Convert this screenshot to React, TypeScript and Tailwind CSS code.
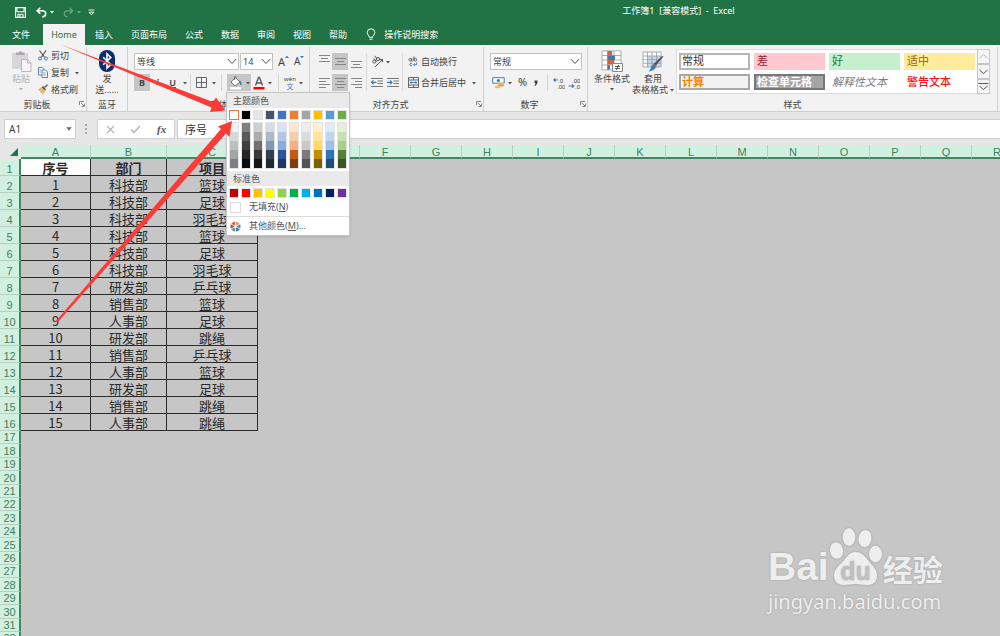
import React from "react";

const TABS = ["插入", "页面布局", "公式", "数据", "审阅", "视图", "帮助"];

const SPORTS: [string, string][] = [
  ["科技部", "篮球"],
  ["科技部", "足球"],
  ["科技部", "羽毛球"],
  ["科技部", "篮球"],
  ["科技部", "足球"],
  ["科技部", "羽毛球"],
  ["研发部", "乒乓球"],
  ["销售部", "篮球"],
  ["人事部", "足球"],
  ["研发部", "跳绳"],
  ["销售部", "乒乓球"],
  ["人事部", "篮球"],
  ["研发部", "足球"],
  ["销售部", "跳绳"],
  ["人事部", "跳绳"],
];

const EXTRA_COLUMNS = "DEFGHIJKLMNOPQR".split("");

const THEME_COLUMNS: string[][] = [
  ["#ffffff", "#f2f2f2", "#d8d8d8", "#bfbfbf", "#a5a5a5", "#7f7f7f"],
  ["#000000", "#7f7f7f", "#595959", "#3f3f3f", "#262626", "#0c0c0c"],
  ["#e7e6e6", "#d0cece", "#aeabab", "#757070", "#3a3838", "#171616"],
  ["#44546a", "#d6dce4", "#adb9ca", "#8496b0", "#323f4f", "#222a35"],
  ["#4472c4", "#d9e2f3", "#b4c6e7", "#8eaadb", "#2f5496", "#1f3864"],
  ["#ed7d31", "#fbe5d5", "#f7cbac", "#f4b183", "#c55a11", "#833c0b"],
  ["#a5a5a5", "#ededed", "#dbdbdb", "#c9c9c9", "#7b7b7b", "#525252"],
  ["#ffc000", "#fff2cc", "#fee599", "#ffd965", "#bf9000", "#7f6000"],
  ["#5b9bd5", "#deebf6", "#bdd7ee", "#9cc3e5", "#2e75b5", "#1e4e79"],
  ["#70ad47", "#e2efd9", "#c5e0b3", "#a8d08d", "#538135", "#375623"],
];

const STANDARD = ["#c00000", "#ff0000", "#ffc000", "#ffff00", "#92d050", "#00b050", "#00b0f0", "#0070c0", "#002060", "#7030a0"];

function Caret({ faint = false }: { faint?: boolean }) {
  return (
    <svg className={faint ? "h-1 w-1 shrink-0 text-[#b0b0b0]" : "h-1 w-1 shrink-0 text-[#555]"} viewBox="0 0 4 4" fill="currentColor">
      <path d="M0 1h4L2 3.4z" />
    </svg>
  );
}

function Divider() {
  return <span className="h-[17px] w-px shrink-0 bg-[#d4d4d4]" />;
}

function Launcher() {
  return (
    <button aria-label="更多设置" className="absolute bottom-1 right-px h-[6px] w-[6px]">
      <svg viewBox="0 0 6 6" className="h-[6px] w-[6px]" fill="none" stroke="#666" strokeWidth="0.8">
        <path d="M.5 4V.5H5M2 2l3 3M5.4 2.6v2.9H2.6" />
      </svg>
    </button>
  );
}

function Group({ label, launcher, className, children }: { label: string; launcher?: boolean; className: string; children: React.ReactNode }) {
  return (
    <section aria-label={label} className={"relative flex flex-col border-r border-[#d0d0d0] " + className}>
      <div className="h-[51px]">{children}</div>
      <div className="h-[13px] text-center leading-[13px]">{label}</div>
      {launcher && <Launcher />}
    </section>
  );
}

function Combo({ label, value, className }: { label: string; value: string; className: string }) {
  return (
    <div className={"relative flex h-[17px] shrink-0 " + className}>
      <select aria-label={label} defaultValue={value} className="h-full w-full appearance-none border border-[#c3c3c3] bg-white pl-[2px] leading-[15px] outline-none">
        <option>{value}</option>
      </select>
      <svg className="pointer-events-none absolute right-[2px] top-[5px] h-[7px] w-[10px]" viewBox="0 0 10 7" fill="none" stroke="#555">
        <path d="M.8 1 5 5.5 9.2 1" />
      </svg>
    </div>
  );
}

function Lines({ kind, offset = 2 }: { kind: "full" | "left" | "center" | "right"; offset?: number }) {
  const count = kind === "full" ? 3 : 4;
  const rows = Array.from({ length: count }, (_, i) => {
    const short = i % 2 === 1;
    const w = short ? 7 : 11;
    const x = kind === "right" ? 11 - w : kind === "left" ? 0 : (11 - w) / 2;
    return <rect key={i} x={x} y={offset + i * 3} width={w} height="1" />;
  });
  return (
    <svg viewBox="0 0 11 15" className="h-[15px] w-[11px]" fill="#858585">
      {rows}
    </svg>
  );
}

function TitleBar() {
  return (
    <div className="flex h-6 items-center pl-[15px] text-white">
      <button aria-label="保存" className="mr-[10px]">
        <svg viewBox="0 0 11 11" className="h-[11px] w-[11px]" fill="none" stroke="#fff" strokeWidth="1.1">
          <path d="M.6.6h9.8v9.8H.6zM2 .6v4.2h7V.6M3 10.4V7.2h5v3.2M5 8v2" />
        </svg>
      </button>
      <button aria-label="撤消" className="mr-[9px] flex items-center gap-[3px]">
        <svg viewBox="0 0 11 11" className="h-[11px] w-[11px]" fill="none" stroke="#fff" strokeWidth="1.6">
          <path d="M4.300.8 1.200 3.800l3.100 3M1.400 3.800h4.800c2 0 3.500 1.200 3.500 3 0 1.700-1.400 2.900-3.400 3.200" />
        </svg>
        <svg viewBox="0 0 4 4" className="h-1 w-1" fill="#fff"><path d="M0 1h4L2 3.400z" /></svg>
      </button>
      <button aria-label="恢复" className="mr-[7px] flex items-center gap-[3px] opacity-35">
        <svg viewBox="0 0 11 11" className="h-[11px] w-[11px]" fill="none" stroke="#fff" strokeWidth="1.200">
          <path d="M6.700.8l3.100 3-3.100 3M9.600 3.800H4.800c-2 0-3.500 1.200-3.500 3 0 1.700 1.400 2.900 3.400 3.200" />
        </svg>
        <svg viewBox="0 0 4 4" className="h-1 w-1" fill="#fff"><path d="M0 1h4L2 3.400z" /></svg>
      </button>
      <button aria-label="自定义快速访问工具栏">
        <svg viewBox="0 0 7 7" className="h-[7px] w-[7px]" fill="none" stroke="#fff" strokeWidth="0.900">
          <path d="M.5 1h6M1 3.200h5L3.500 5.800z" />
        </svg>
      </button>
      <h1 className="ml-[262px] flex-1 whitespace-pre pb-[2px] text-center text-[9px]">工作簿1  [兼容模式]  -  Excel</h1>
    </div>
  );
}

function TabStrip() {
  return (
    <nav className="flex h-[21px] items-stretch pl-[3px] text-[9px] text-white">
      <button className="px-[9px]">文件</button>
      <button className="ml-1 mr-px w-[42px] bg-[#f2f2f2] text-[#217346]">Home</button>
      {TABS.map((t) => (
        <button key={t} className="px-[9px]">{t}</button>
      ))}
      <button className="ml-[10px] flex items-center gap-2">
        <svg viewBox="0 0 10 13" className="h-[13px] w-[10px]" fill="none" stroke="#fff" strokeWidth="1">
          <path d="M3.300 9.300C3.300 7.500 1.200 6.800 1.200 4.600a3.800 3.800 0 0 1 7.600 0c0 2.200-2.100 2.900-2.100 4.700zM3.500 11.200h3" />
        </svg>
        操作说明搜索
      </button>
    </nav>
  );
}

function ClipboardGroup() {
  return (
    <Group label="剪贴板" launcher className="w-[87px] shrink-0 [&>div:nth-child(2)]:pr-3">
      <div className="flex">
        <button className="flex w-[38px] flex-col items-center pl-1 pt-[3px] text-[#b5b5b5]">
          <svg viewBox="0 0 21 22" className="h-[22px] w-[21px]">
            <path d="M1 3h16v16H1z" fill="#d9d6d9" />
            <path d="M5 5V2.500h2.500a1.800 1.800 0 0 1 3.400 0h2.600V5z" fill="#aaa5aa" />
            <path d="M10.500 9.500h6l3.500 3.500v8.500h-9.500z" fill="#f7f3f7" stroke="#b9b5b9" />
            <path d="M16.500 9.500V13H20" fill="none" stroke="#b9b5b9" />
          </svg>
          <span className="leading-[13px]">粘贴</span>
          <span className="flex h-2 items-center"><Caret faint /></span>
        </button>
        <div className="flex flex-col">
          <button className="flex h-[17px] items-center gap-[3px]">
            <svg viewBox="0 0 10 11" className="h-[11px] w-[10px]" fill="none">
              <path d="M1.500.5 6.800 7.500M8 .5 3.200 7.500" stroke="#555" strokeWidth="1.200" />
              <circle cx="2" cy="8.500" r="1.500" stroke="#3d7ab8" /><circle cx="7.900" cy="8.500" r="1.500" stroke="#3d7ab8" />
            </svg>
            剪切
          </button>
          <button className="flex h-[17px] items-center gap-[3px]">
            <svg viewBox="0 0 10 11" className="h-[11px] w-[10px]" fill="#fff" stroke="#5a7391" strokeWidth="0.900">
              <path d="M.5.5h3.700L6 2.300v5.700H.5z" /><path d="M4 3h3.500l2 2v5.500H4z" />
              <path d="M5.200 6h2.500M5.200 8h2.500M1.500 3h1.500M1.500 5h1.500" stroke="#4b92d4" />
            </svg>
            复制
            <span className="ml-[3px]"><Caret /></span>
          </button>
          <button className="flex h-[17px] items-center gap-[3px]">
            <svg viewBox="0 0 10 11" className="h-[11px] w-[10px]">
              <path d="M0 5.500 3.500 3l4 4-2.500 3.500z" fill="#f0b968" />
              <path d="M3.600 3.300 5 2l3 3.400-1 1.200z" fill="#555" /><path d="M6.500 3.500 9.500.8" stroke="#555" strokeWidth="1.400" />
            </svg>
            格式刷
          </button>
        </div>
      </div>
    </Group>
  );
}

function BluetoothGroup() {
  return (
    <Group label="蓝牙" className="w-[41px] shrink-0">
      <button className="flex w-full flex-col items-center pt-[3px]">
        <svg viewBox="0 0 16 22" className="h-[22px] w-4">
          <rect width="16" height="22" rx="8" fill="#0a2f6b" />
          <path d="M4.200 7.200 11.800 14.600 8 18.200V3.800l3.800 3.600-7.600 7.400" fill="none" stroke="#fff" strokeWidth="1.600" />
        </svg>
        <span className="leading-[13px]">发</span>
        <span className="leading-[9px]">送......</span>
      </button>
    </Group>
  );
}

function Swatch({ color, selected = false }: { color: string; selected?: boolean }) {
  return (
    <button
      aria-label={color}
      className={selected ? "h-[10px] w-[10px] border border-[#f0703a]" : "h-[10px] w-[10px] border border-[#e2e2e2]"}
      style={{ backgroundColor: color }}
    />
  );
}

function ColorMenu() {
  return (
    <div role="menu" aria-label="填充颜色" className="absolute left-[-1px] top-[18px] z-20 w-[124px] border border-[#c6c6c6] bg-white text-[9px] text-[#555] shadow-sm">
      <div className="h-[15px] bg-[#eaeaea] pl-[6px] leading-[15px]">主题颜色</div>
      <div className="flex justify-between px-[2px] pt-[2px]">
        {THEME_COLUMNS.map((c, i) => (
          <Swatch key={i} color={c[0]} selected={i === 0} />
        ))}
      </div>
      <div className="flex justify-between px-[2px] pb-[2px] pt-[2px]">
        {THEME_COLUMNS.map((c, i) => (
          <div key={i} className="flex w-[10px] flex-col border border-[#e2e2e2]">
            {c.slice(1).map((v) => (
              <button key={v} aria-label={v} className="h-[9px]" style={{ backgroundColor: v }} />
            ))}
          </div>
        ))}
      </div>
      <div className="h-[15px] bg-[#eaeaea] pl-[6px] leading-[15px]">标准色</div>
      <div className="flex justify-between px-[2px] pt-[2px]">
        {STANDARD.map((c) => (
          <Swatch key={c} color={c} />
        ))}
      </div>
      <button role="menuitem" className="flex h-[19px] w-full items-center gap-2 border-b border-[#dcdcdc] pl-[3px]">
        <span className="h-[11px] w-[11px] border border-[#dcdcdc] bg-white" />
        <span>无填充(<u>N</u>)</span>
      </button>
      <button role="menuitem" className="flex h-[18px] w-full items-center gap-2 pl-[3px]">
        <svg viewBox="0 0 12 12" className="h-[11px] w-[11px]">
          <path d="M6 6V.5A5.500 5.500 0 0 1 10.800 3.300z" fill="#eda05c" />
          <path d="M6 6l4.800-2.700a5.500 5.500 0 0 1 0 5.400z" fill="#5b8fc7" />
          <path d="M6 6l4.800 2.700A5.500 5.500 0 0 1 6 11.500z" fill="#4774a8" />
          <path d="M6 6v5.500a5.500 5.500 0 0 1-4.800-2.800z" fill="#63a06b" />
          <path d="M6 6 1.200 8.700a5.500 5.500 0 0 1 0-5.400z" fill="#9a5a78" />
          <path d="M6 6 1.200 3.300A5.500 5.500 0 0 1 6 .5z" fill="#d8623a" />
          <path d="M6 .5v11M1.200 3.300l9.600 5.400M1.200 8.700l9.600-5.400" stroke="#fff" strokeWidth="0.800" />
          <circle cx="6" cy="6" r="1.400" fill="#fff" />
        </svg>
        <span>其他颜色(<u>M</u>)...</span>
      </button>
    </div>
  );
}

function FontGroup() {
  return (
    <Group label="字体" className="w-[182px] shrink-0">
      <div className="flex flex-col gap-1 pl-[6px] pt-[6px]">
        <div className="flex items-center">
          <Combo label="字体" value="等线" className="w-[105px]" />
          <Combo label="字号" value="14" className="ml-px w-[33px]" />
          <button aria-label="增大字号" className="ml-[5px] flex text-[11px] leading-[17px]">
            A<svg viewBox="0 0 4 4" className="mt-[2px] h-1 w-1" fill="#3d7ab8"><path d="M0 3h4L2 .8z" /></svg>
          </button>
          <button aria-label="减小字号" className="ml-[5px] flex text-[10px] leading-[17px]">
            A<svg viewBox="0 0 4 4" className="mt-[2px] h-1 w-1" fill="#3d7ab8"><path d="M0 1h4L2 3.200z" /></svg>
          </button>
        </div>
        <div className="flex h-[17px] items-center">
          <button className="h-[17px] w-4 bg-[#c6c6c6] font-bold">B</button>
          <button className="w-[15px] font-['Liberation_Serif',serif] italic">I</button>
          <button className="w-[15px] font-semibold underline">U</button>
          <span className="mx-[3px]"><Caret /></span>
          <Divider />
          <button aria-label="边框" className="mx-[5px] flex items-center gap-[5px]">
            <svg viewBox="0 0 11 11" className="h-[11px] w-[11px]" fill="none" stroke="#666"><path d="M.5.5h10v10H.5zM5.500.5v10M.5 5.500h10" /></svg>
            <Caret />
          </button>
          <Divider />
          <div className="relative ml-[5px]">
            <button aria-label="填充颜色" aria-expanded="true" className="flex h-[17px] w-6 items-center gap-[3px] bg-[#c6c6c6] pl-[2px]">
              <svg viewBox="0 0 14 14" className="h-[14px] w-[14px]">
                <path d="M2 6 6.500 1.500 11 6 6 10z" fill="#fff" stroke="#666" strokeWidth="0.900" /><path d="M5.500 4V.8h1.500V3" fill="none" stroke="#666" strokeWidth="0.800" />
                <path d="M10.500 4.500c2 .8 2.500 3 1.800 5-1.300-.5-1.800-2-1.800-5z" fill="#3d7ab8" />
                <path d="M1 11h11v2.500H1z" fill="#fff" />
              </svg>
              <Caret />
            </button>
            <ColorMenu />
          </div>
          <button aria-label="字体颜色" className="ml-[2px] mr-[6px] flex items-center gap-[3px]">
            <svg viewBox="0 0 12 14" className="h-[14px] w-3"><path d="M2.500 9.500 5.500 1.500h1l3 8M3.600 7h4.800" fill="none" stroke="#555" strokeWidth="1.300" /><path d="M.5 11h11v2.500H.5z" fill="#f00" /></svg>
            <Caret />
          </button>
          <Divider />
          <button aria-label="拼音" className="ml-[5px] flex items-center gap-[3px]">
            <span className="flex w-3 flex-col items-center"><span className="text-[6px] leading-[8px]">wén</span><span className="text-[7px] leading-[8px] text-[#3d7ab8]">文</span></span>
            <Caret />
          </button>
        </div>
      </div>
    </Group>
  );
}

function Indent({ flip = false }: { flip?: boolean }) {
  return (
    <svg viewBox="0 0 12 11" className="h-[11px] w-3" fill="none" stroke="#777">
      <path d="M0 1.500h12M6.500 4h5.500M6.500 6.500h5.500M0 9.500h12" />
      <path d={flip ? "M0 5.300h5M3 3.300l2 2-2 2" : "M5.500 5.300h-5M2.500 3.300l-2 2 2 2"} stroke="#3d7ab8" strokeWidth="1.200" />
    </svg>
  );
}

function AlignGroup() {
  return (
    <Group label="对齐方式" launcher className="w-[174px] shrink-0 [&>div:nth-child(2)]:pr-3">
      <div className="flex pl-[6px] pt-[6px]">
        <div className="flex flex-col gap-1">
          <div className="flex h-[17px]">
            <button aria-label="顶端对齐" className="flex w-4 items-center justify-center"><Lines kind="full" offset={1} /></button>
            <button aria-label="垂直居中" className="flex w-4 items-center justify-center bg-[#c6c6c6]"><Lines kind="full" offset={4} /></button>
            <button aria-label="底端对齐" className="flex w-4 items-center justify-center"><Lines kind="full" offset={7} /></button>
          </div>
          <div className="flex h-[17px]">
            <button aria-label="左对齐" className="flex w-4 items-center justify-center"><Lines kind="left" offset={3} /></button>
            <button aria-label="居中" className="flex w-4 items-center justify-center bg-[#c6c6c6]"><Lines kind="center" offset={3} /></button>
            <button aria-label="右对齐" className="flex w-4 items-center justify-center"><Lines kind="right" offset={3} /></button>
          </div>
        </div>
        <div className="ml-[2px] flex w-[37px] flex-col gap-1 border-x border-[#dadada] pl-1">
          <button aria-label="方向" className="flex h-[17px] items-center gap-[2px]">
            <svg viewBox="0 0 13 13" className="h-[13px] w-[13px]" fill="none" stroke="#555">
              <circle cx="3.300" cy="6.500" r="1.600" /><path d="M3 3.500 5.600 7" /><circle cx="7" cy="4" r="1.600" /><path d="M3.700.8 5.800 3.500" /><path d="M4 12 11.500 4.500M9 4.500h2.500V7" />
            </svg>
            <Caret />
          </button>
          <div className="flex h-[17px] items-center gap-1">
            <button aria-label="减少缩进"><Indent /></button>
            <button aria-label="增加缩进"><Indent flip /></button>
          </div>
        </div>
        <div className="ml-[5px] flex flex-col gap-1">
          <button className="flex h-[17px] items-center gap-[3px] whitespace-nowrap">
            <svg viewBox="0 0 11 13" className="h-[13px] w-[10px]" fill="none" stroke="#555">
              <circle cx="2.500" cy="4.500" r="1.500" /><path d="M4.200 2.800V6.500M6.500.8v5.200" /><circle cx="8" cy="4.500" r="1.500" /><path d="M4.500 8.600a1.500 1.500 0 1 0 0 2.400" /><path d="M9.500 7.500v2.500H6M7.500 8.500 6 10l1.500 1.500" stroke="#3d7ab8" />
            </svg>
            自动换行
          </button>
          <button className="flex h-[17px] items-center gap-[2px] whitespace-nowrap">
            <svg viewBox="0 0 11 11" className="h-[11px] w-[11px]" fill="none" stroke="#666">
              <path d="M.5.5h10v10H.5zM.5 3h10M.5 8h10M5.500.5V3M5.500 8v2.500" /><path d="M2 5.500h7M3.500 4.300 2.200 5.500l1.300 1.200M7.500 4.300l1.300 1.200-1.300 1.200" stroke="#3d7ab8" />
            </svg>
            合并后居中
            <span className="ml-1"><Caret /></span>
          </button>
        </div>
      </div>
    </Group>
  );
}

function DecimalIcon({ increase = false }: { increase?: boolean }) {
  return (
    <svg viewBox="0 0 12 12" className="h-3 w-3" fontSize="6" fontFamily="Liberation Sans" fill="#444">
      <text x={increase ? 5 : 4} y="5.500">{increase ? ".0" : ".00"}</text>
      <text x={increase ? 4 : 7} y="11.500">{increase ? ".00" : ".0"}</text>
      <path d={increase ? "M5 3H.8M2.500 1.300.8 3l1.700 1.700" : "M.5 9h5M4 7.300 5.700 9 4 10.700"} fill="none" stroke="#3d7ab8" strokeWidth="1.200" />
    </svg>
  );
}

function NumberGroup() {
  return (
    <Group label="数字" launcher className="w-[104px] shrink-0 [&>div:nth-child(2)]:pr-3">
      <div className="flex flex-col gap-1 pl-[6px] pr-[5px] pt-[6px]">
        <Combo label="数字格式" value="常规" className="w-full" />
        <div className="flex h-[17px] items-center">
          <button aria-label="会计数字格式" className="ml-[2px] flex items-center gap-[3px]">
            <svg viewBox="0 0 13 13" className="h-[13px] w-[13px]">
              <path d="M.7 1.700h11.500v5.500H.7z" fill="#fff" stroke="#3d7ab8" /><circle cx="6.400" cy="4.500" r="1.600" fill="#3d7ab8" />
              <ellipse cx="9" cy="7.500" rx="3.200" ry="1.300" fill="#f0b968" /><ellipse cx="9" cy="9.300" rx="3.200" ry="1.200" fill="#e5a548" /><ellipse cx="5.500" cy="11" rx="3" ry="1.200" fill="#f0b968" />
            </svg>
            <Caret />
          </button>
          <button className="ml-[6px] text-[11px]">%</button>
          <button aria-label="千位分隔样式" className="ml-[7px] flex w-2 items-center">
            <svg viewBox="0 0 4 6" className="h-[6px] w-1" fill="#444"><path d="M.5.5h3v2.500L1.700 5.800H.6L1.500 3H.5z" /></svg>
          </button>
          <span className="ml-[5px]" />
          <Divider />
          <button aria-label="增加小数位数" className="ml-[5px]"><DecimalIcon increase /></button>
          <button aria-label="减少小数位数" className="ml-[3px]"><DecimalIcon /></button>
        </div>
      </div>
    </Group>
  );
}

const GALLERY = [
  { t: "常规", c: "border-2 border-[#b5b5b5] bg-white text-[#333]" },
  { t: "差", c: "border-2 border-[#ffc7ce] bg-[#ffc7ce] text-[#9c2030]" },
  { t: "好", c: "border-2 border-[#c6efce] bg-[#c6efce] text-[#1f7a2e]" },
  { t: "适中", c: "border-2 border-[#ffeb9c] bg-[#ffeb9c] text-[#9c6500]" },
  { t: "计算", c: "border-2 border-[#a8a8a8] bg-[#f2f2f2] font-bold text-[#fa7d00]" },
  { t: "检查单元格", c: "border-2 border-[#777] bg-[#a5a5a5] font-bold text-white" },
  { t: "解释性文本", c: "border-2 border-white bg-white italic text-[#7f7f7f]" },
  { t: "警告文本", c: "border-2 border-white bg-white font-medium text-[#ff1010]" },
];

function StylesGroup() {
  return (
    <Group label="样式" launcher={false} className="mr-[2px] min-w-[409px] flex-1">
      <div className="flex">
        <button className="ml-[5px] flex w-[38px] flex-col items-center pt-[3px]">
          <svg viewBox="0 0 22 22" className="h-[22px] w-[22px]">
            <path d="M1 1h19v19H1z" fill="#fff" /><path d="M1 .9h19v19H1zM1 5.500h19M1 10h19M1 15h19M6.500 1v19M13 1v19" fill="none" stroke="#999" strokeWidth="0.800" />
            <path d="M6.500 1H11v4.500H6.500zM6.500 10H13v4.500H6.500z" fill="#d9603a" /><path d="M6.500 5.500H14V10H6.500zM6.500 15H9v4.500H6.500z" fill="#3d7ab8" />
            <path d="M11.500 13.500h10v8h-10z" fill="#fff" stroke="#888" /><path d="M14 16.500h5M14 18.500h5M17.800 15l-2.600 5" stroke="#333" strokeWidth="0.800" />
          </svg>
          <span className="whitespace-nowrap leading-[13px]">条件格式</span>
          <span className="flex h-2 items-center"><Caret /></span>
        </button>
        <button className="ml-px flex w-[42px] flex-col items-center pt-[3px]">
          <svg viewBox="0 0 22 22" className="h-[22px] w-[22px]">
            <path d="M1 2h18v15H1z" fill="#fff" /><path d="M5.500 6H19v11H5.500z" fill="#c5d6ec" /><path d="M1 2h18v15H1zM1 6h18M1 9.700h18M1 13.300h18M5.500 2v15M10 2v15M14.500 2v15" fill="none" stroke="#999" strokeWidth="0.800" />
            <path d="M21.500 6.500 13.500 16l-2-2L20 6z" fill="#555" /><path d="M11.500 14l2.500 2.500c-1 3.500-4 4.500-7.500 5 2.500-2 2.500-6 5-7.500z" fill="#3d7ab8" />
          </svg>
          <span className="leading-[13px]">套用</span>
          <span className="flex items-center gap-[2px] whitespace-nowrap leading-[9px]">表格格式<Caret /></span>
        </button>
        <div className="ml-[2px] mt-[2px] flex h-[45px] w-[314px] border border-[#dcdcdc] bg-white">
          <div className="grid flex-1 grid-cols-4 grid-rows-2 gap-x-1 gap-y-1 px-[2px] py-[3px] text-[11px]">
            {GALLERY.map((g) => (
              <button key={g.t} className={"flex items-center whitespace-nowrap pl-px text-left leading-[12px] " + g.c}>{g.t}</button>
            ))}
          </div>
          <div className="-my-px -mr-px flex w-[13px] flex-col">
            {["M1.500 5 5.500 1.500 9.500 5", "M1.500 2 5.500 5.500 9.500 2", "M.5 .5H10.500M1.500 3 5.500 6.500 9.500 3"].map((d, i) => (
              <button key={d} aria-label={["向上", "向下", "其他"][i]} className="flex flex-1 items-center justify-center border border-[#c6c6c6] bg-[#f5f5f5]">
                <svg viewBox="0 0 11 7" className="h-[7px] w-[11px]" fill="none" stroke={i === 0 ? "#bbb" : "#555"}><path d={d} /></svg>
              </button>
            ))}
          </div>
        </div>
      </div>
    </Group>
  );
}

function FormulaBar() {
  return (
    <div className="flex h-[34px] items-start border-t border-[#cfcfcf] bg-[#e6e6e6] pl-1 pt-[7px]">
      <div className="relative flex h-5 w-[72px]">
        <input aria-label="名称框" defaultValue="A1" className="h-full w-full border border-[#d0d0d0] bg-white pl-1 text-[10px] text-[#444] outline-none" />
        <svg viewBox="0 0 6 4" className="pointer-events-none absolute right-1 top-2 h-1 w-[6px]" fill="#666"><path d="M.3.300h5.400L3 3.700z" /></svg>
      </div>
      <svg viewBox="0 0 2 10" className="ml-[9px] mt-[5px] h-[10px] w-[2px]" fill="#aaa"><path d="M0 0h2v2H0zM0 4h2v2H0zM0 8h2v2H0z" /></svg>
      <div className="ml-[10px] flex h-5 w-[78px] items-center justify-around border border-[#d0d0d0] bg-white">
        <button aria-label="取消"><svg viewBox="0 0 9 9" className="h-[9px] w-[9px]" fill="none" stroke="#b5b5b5" strokeWidth="1.200"><path d="M1 1l7 7M8 1 1 8" /></svg></button>
        <button aria-label="输入"><svg viewBox="0 0 11 9" className="h-[9px] w-[11px]" fill="none" stroke="#b5b5b5" strokeWidth="1.500"><path d="M1 4.500l3 3L10 1" /></svg></button>
        <button className="font-['Liberation_Serif',serif] text-[11px] font-bold italic text-[#555]">fx</button>
      </div>
      <input aria-label="编辑栏" defaultValue="序号" className="ml-[2px] h-5 flex-1 border border-r-0 border-[#d0d0d0] bg-white pl-[7px] text-[11px] text-[#333] outline-none" />
    </div>
  );
}

const rowHead = "border-b border-r-2 border-b-[#b9cfc3] border-r-[#3d8a61] bg-[#d2f0e0] p-0 text-center align-bottom font-normal leading-[11px] text-[#43805f] text-[11px] font-['Liberation_Sans',sans-serif]";
const colHead = "border-b-2 border-r border-b-[#3d8a61] border-r-[#b9cfc3] bg-[#d2f0e0] p-0 text-center align-bottom font-normal leading-[10px] text-[#43805f] text-[11px] font-['Liberation_Sans',sans-serif]";
const cell = "border-b border-r border-[#2a2a2a] p-0 text-center align-bottom";

function Sheet() {
  return (
    <main className="min-h-0 flex-1 overflow-hidden bg-[#c6c6c6]">
      <table className="w-[1023px] min-w-full table-fixed border-separate border-spacing-0 font-['Noto_Sans_CJK_SC',sans-serif] text-[13px] leading-[15px] text-[#2a2a2a]">
        <colgroup>
          <col className="w-[21px]" />
          <col className="w-[70px]" />
          <col className="w-[76px]" />
          <col className="w-[91px]" />
          {EXTRA_COLUMNS.map((c) => (
            <col key={c} className="w-[51px]" />
          ))}
        </colgroup>
        <thead>
          <tr className="h-[14px]">
            <th aria-label="全选" className="bg-[#e6e6e6] p-0">
              <svg viewBox="0 0 8 8" className="ml-auto mr-[3px] h-2 w-2" fill="#217346"><path d="M8 0v8H0z" /></svg>
            </th>
            {["A", "B", "C", ...EXTRA_COLUMNS].map((c) => (
              <th key={c} className={colHead}>{c}</th>
            ))}
          </tr>
        </thead>
        <tbody>
          <tr className="h-[17px]">
            <th className={rowHead}>1</th>
            <td className={cell + " bg-white font-bold"}>序号</td>
            <td className={cell + " font-bold"}>部门</td>
            <td className={cell + " font-bold"}>项目</td>
            <td colSpan={15} className="p-0" />
          </tr>
          {SPORTS.map(([dept, sport], i) => (
            <tr key={i} className="h-[17px]">
              <th className={rowHead}>{i + 2}</th>
              <td className={cell}>{i + 1}</td>
              <td className={cell}>{dept}</td>
              <td className={cell}>{sport}</td>
              <td colSpan={15} className="p-0" />
            </tr>
          ))}
          {Array.from({ length: 16 }, (_, i) => (
            <tr key={i} className={i % 5 === 1 || i % 5 === 3 ? "h-[14px]" : "h-[13px]"}>
              <th className={rowHead}>{i + 17}</th>
              <td colSpan={18} className="p-0" />
            </tr>
          ))}
        </tbody>
      </table>
    </main>
  );
}

function Watermark() {
  return (
    <div className="pointer-events-none absolute bottom-5 right-[52px] w-[180px] text-[#eeeeee] [text-shadow:0_0_2px_#999]">
      <div className="mb-[3px] flex h-[60px] items-end">
        <span className="font-['Liberation_Sans',sans-serif] text-[39px] font-bold leading-[36px]">Bai</span>
        <svg viewBox="0 0 54 58" className="h-[58px] w-[54px] shrink-0 drop-shadow-[0_0_1px_#999]" fill="#eee">
          <ellipse cx="7.500" cy="23.500" rx="6.500" ry="8.300" transform="rotate(-8 7.500 23.500)" />
          <ellipse cx="20" cy="10" rx="6.300" ry="9" />
          <ellipse cx="36" cy="11.500" rx="6.500" ry="8.500" transform="rotate(10 36 11.500)" />
          <ellipse cx="46.500" cy="27" rx="6.500" ry="8.300" />
          <path d="M26.500 25c-6 0-8.500 4.500-12 9-4 4.500-9.500 8-9.500 14.500 0 6 4 9.500 9.500 9.500 4 0 7.500-1 12-1s8 1 12.500 1c5.500 0 9-3.500 9-9.500 0-6.500-4.500-9.500-8.500-14.500-3.500-4.500-6.500-9-13-9z" />
          <text x="26.500" y="53" textAnchor="middle" fontFamily="Liberation Sans" fontWeight="700" fontSize="25" fill="#c0c0c0">du</text>
        </svg>
        <span className="pb-px font-['Noto_Sans_CJK_SC',sans-serif] text-[30px] font-bold leading-[32px]">经验</span>
      </div>
      <div className="text-[20px] leading-[28px]">jingyan.baidu.com</div>
    </div>
  );
}

export default function App() {
  return (
    <div className="relative flex h-screen flex-col overflow-hidden bg-[#c6c6c6] font-['Noto_Sans','Noto_Sans_CJK_SC',sans-serif]">
      <header className="bg-[#217346]">
        <TitleBar />
        <TabStrip />
      </header>
      <div className="flex h-[66px] items-stretch bg-[#f2f2f2] pt-[2px] text-[9px] text-[#444]">
        <ClipboardGroup />
        <BluetoothGroup />
        <FontGroup />
        <AlignGroup />
        <NumberGroup />
        <StylesGroup />
      </div>
      <FormulaBar />
      <Sheet />
      <Watermark />
      <svg className="pointer-events-none absolute left-0 top-0 z-30 h-full w-full" fill="#fb3b38">
        <path d="M60.500 44.500 213 102l3-4.500 9.500 13L210 112l1.500-4.500z" />
        <path d="M56 321 221 129l-3-2.500 14-5.500-2.500 16-3.500-3.500L57.500 322.500z" />
      </svg>
    </div>
  );
}
